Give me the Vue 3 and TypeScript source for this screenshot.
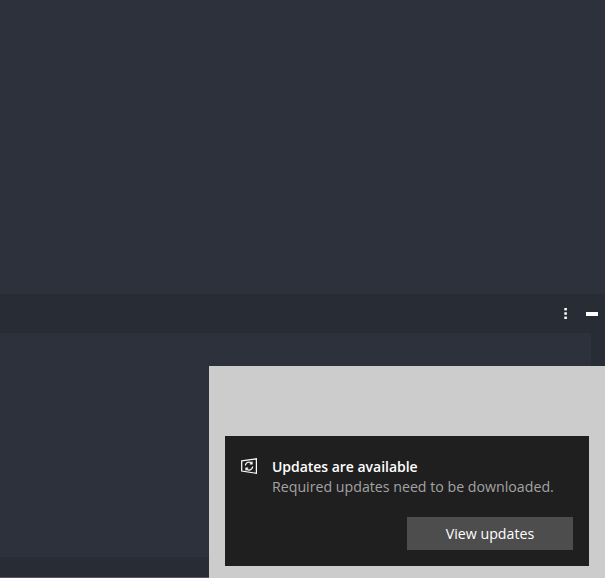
<script setup lang="ts">
const title: string = 'Updates are available'
const message: string = 'Required updates need to be downloaded.'
</script>

<template>
  <div class="page">
    <div class="top"></div>
    <div class="bar">
      <svg class="dots" width="3" height="11" viewBox="0 0 3 11"><rect x="0.3" y="0" width="2.6" height="2.4" /><rect x="0.3" y="4.3" width="2.6" height="2.4" /><rect x="0.3" y="8.6" width="2.6" height="2.4" /></svg>
      <span class="dash"></span>
    </div>
    <div class="body">
      <div class="pane"></div>
      <div class="scroll"></div>
    </div>
    <div class="foot"></div>

    <aside class="toast">
      <div class="card">
        <div class="row">
          <svg class="icon" width="16" height="16" viewBox="0 0 16 16" fill="none" stroke="#fff" stroke-width="1.2">
            <path d="M0.7 2.8 L15.4 0.8 V15.3 L0.7 13 Z" />
            <path d="M4.4 7.6 A3.6 3.6 0 0 1 10.9 5.6 M11.6 8.6 A3.6 3.6 0 0 1 5.1 10.6" />
            <path d="M11 3.6 V5.9 H8.8 M5 12.4 V10.2 H7.2" />
          </svg>
          <div class="texts">
            <div class="title">{{ title }}</div>
            <div class="msg">{{ message }}</div>
          </div>
        </div>
        <div class="actions"><button class="btn">View updates</button></div>
      </div>
    </aside>
  </div>
</template>

<style>
html, body { margin: 0; background: #2c313c; }
</style>

<style scoped>
.page { position: relative; width: 605px; height: 578px; overflow: hidden; display: flex; flex-direction: column; background: #2c313c; font-family: "Open Sans", "Noto Sans", sans-serif; }
.top { height: 294px; flex: none; }
.bar { height: 39px; flex: none; background: #282c34; display: flex; align-items: center; justify-content: flex-end; gap: 19px; padding-right: 7px; box-sizing: border-box; }
.dots { fill: #fff; }
.dash { width: 12px; height: 4px; background: #fff; }
.body { height: 224px; flex: none; display: flex; }
.pane { flex: 1; }
.scroll { width: 14px; background: #282c34; }
.foot { flex: 1; background: #282c34; border-bottom: 1px solid #55585e; }
.toast { position: absolute; left: 209px; top: 366px; width: 396px; height: 212px; background: #cccccc; padding: 70px 16px 12px; box-sizing: border-box; }
.card { height: 130px; background: #1f1f1f; box-sizing: border-box; padding: 21px 16px 16px; display: flex; flex-direction: column; justify-content: space-between; }
.row { display: flex; gap: 15px; }
.icon { flex: none; margin-top: 1px; }
.title { color: #fff; font-size: 14px; font-weight: 600; line-height: 20px; letter-spacing: -0.03px; }
.msg { color: #a3a3a3; font-size: 14.2px; line-height: 20px; }
.actions { display: flex; justify-content: flex-end; }
.btn { width: 166px; height: 33px; border: 0; background: #4d4d4d; color: #fff; font: 14.2px "Open Sans", "Noto Sans", sans-serif; padding: 0; }
</style>
